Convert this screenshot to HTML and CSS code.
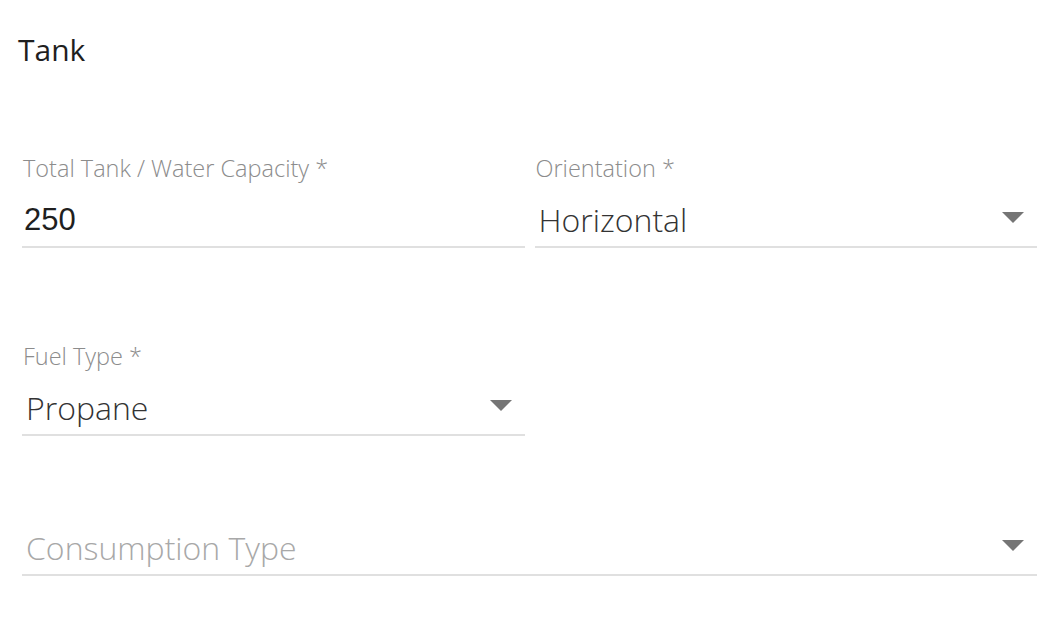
FILE: index.html
```html
<!DOCTYPE html>
<html>
<head>
<meta charset="utf-8">
<link rel="stylesheet" href="styles.css">
</head>
<body>
<div class="page">
  <h2 class="title">Tank</h2>
  <div class="row first">
    <div class="field">
      <div class="label">Total Tank / Water Capacity *</div>
      <div class="control"><span class="value input">250</span></div>
    </div>
    <div class="field">
      <div class="label">Orientation *</div>
      <div class="control"><span class="value">Horizontal</span><span class="arrow"></span></div>
    </div>
  </div>
  <div class="row second">
    <div class="field">
      <div class="label">Fuel Type *</div>
      <div class="control"><span class="value">Propane</span><span class="arrow"></span></div>
    </div>
    <div class="field empty"></div>
  </div>
  <div class="row single">
    <div class="field">
      <div class="control"><span class="value placeholder">Consumption Type</span><span class="arrow"></span></div>
    </div>
  </div>
</div>
</body>
</html>
```
FILE: styles.css
```css
html, body {
  margin: 0;
  padding: 0;
  background: #fff;
}
.page {
  padding: 30px 21px 0 22px;
  font-family: "Open Sans", sans-serif;
}
.title {
  margin: 0 0 0 -4px;
  font-family: "Open Sans", sans-serif;
  font-weight: 400;
  font-size: 30px;
  line-height: 40px;
  color: #1f1f1f;
}
.row {
  display: grid;
  grid-template-columns: 1fr 1fr;
  column-gap: 10px;
}
.row.first {
  margin-top: 83px;
}
.row.second {
  margin-top: 93px;
}
.row.single {
  grid-template-columns: 1fr;
  margin-top: 77px;
}
.label {
  font-weight: 300;
  font-size: 23.5px;
  line-height: 30px;
  margin-bottom: 2px;
  color: #8c8c8c;
  padding-left: 1px;
}
.control {
  display: flex;
  align-items: flex-end;
  justify-content: space-between;
  height: 55px;
  padding-bottom: 6px;
  border-bottom: 2px solid #e0e0e0;
}
.value {
  font-weight: 300;
  font-size: 32px;
  line-height: 40px;
  color: #333;
  padding-left: 4px;
}
.value.input {
  font-family: "Liberation Sans", Arial, sans-serif;
  font-weight: 400;
  font-size: 31px;
  color: #1f1f1f;
  padding-left: 2px;
}
.value.placeholder {
  color: #a8a8a8;
}
.arrow {
  width: 0;
  height: 0;
  border-left: 11px solid transparent;
  border-right: 11px solid transparent;
  border-top: 11px solid #757575;
  margin-right: 13px;
  margin-bottom: 17px;
}
```
